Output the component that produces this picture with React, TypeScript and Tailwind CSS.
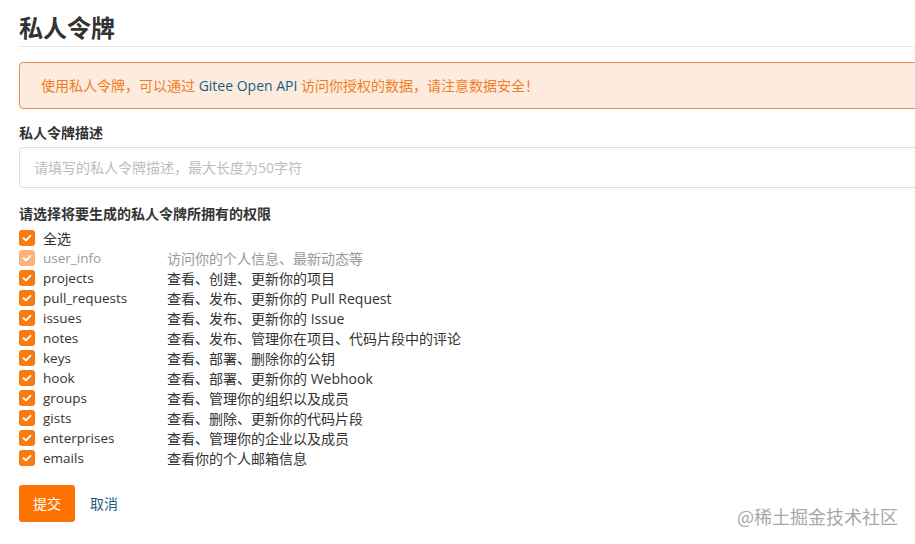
import React from 'react';

const perms = [
  { name: 'user_info', desc: '访问你的个人信息、最新动态等', locked: true },
  { name: 'projects', desc: '查看、创建、更新你的项目' },
  { name: 'pull_requests', desc: '查看、发布、更新你的 Pull Request' },
  { name: 'issues', desc: '查看、发布、更新你的 Issue' },
  { name: 'notes', desc: '查看、发布、管理你在项目、代码片段中的评论' },
  { name: 'keys', desc: '查看、部署、删除你的公钥' },
  { name: 'hook', desc: '查看、部署、更新你的 Webhook' },
  { name: 'groups', desc: '查看、管理你的组织以及成员' },
  { name: 'gists', desc: '查看、删除、更新你的代码片段' },
  { name: 'enterprises', desc: '查看、管理你的企业以及成员' },
  { name: 'emails', desc: '查看你的个人邮箱信息' },
];

const Check = ({ faded }: { faded?: boolean }) => (
  <span className={`w-4 h-4 rounded-[3px] flex items-center justify-center shrink-0 ${faded ? 'bg-[#fcb27a]' : 'bg-[#fa7a12]'}`}>
    <svg width="10" height="10" viewBox="0 0 10 10">
      <path d="M1.6 5.2 L4 7.4 L8.4 2.8" fill="none" stroke="white" strokeWidth="1.9" strokeLinecap="round" strokeLinejoin="round" />
    </svg>
  </span>
);

export default function App() {
  return (
    <div className="w-[915px] h-[544px] overflow-hidden bg-white relative font-['Open_Sans','Noto_Sans_CJK_SC',sans-serif] text-[#333]">
      <div className="pl-[19px] w-[1100px]">
        <h1 className="text-[24px] font-bold leading-[34px] pt-[11px] pb-[1px] border-b border-[#e5e5e5] text-[#333]">私人令牌</h1>

        <div className="mt-[15px] h-[47px] border border-[#ee8a4a] rounded-[4px] bg-[#fdecdd] flex items-center pl-[21px] text-[14px] text-[#f07c26]">
          使用私人令牌，可以通过&nbsp;<span className="text-[#155e82]">Gitee Open API</span>&nbsp;访问你授权的数据，请注意数据安全！
        </div>

        <div className="mt-[14px] text-[14px] font-bold leading-[20px] text-[#333]">私人令牌描述</div>
        <div className="mt-[4px] h-[41px] border border-[#dedede] rounded-[4px] flex items-center pl-[14px] text-[14px] text-[#bdbdbd]">
          请填写的私人令牌描述，最大长度为50字符
        </div>

        <div className="mt-[16px] text-[14px] font-bold leading-[20px] text-[#333]">请选择将要生成的私人令牌所拥有的权限</div>
        <div className="mt-[4px] flex flex-col">
          <div className="h-[20px] flex items-center gap-2 text-[14px]">
            <Check />
            <span>全选</span>
          </div>
          {perms.map((p) => (
            <div key={p.name} className={`h-[20px] flex items-center text-[14px] ${p.locked ? 'text-[#999]' : 'text-[#333]'}`}>
              <Check faded={p.locked} />
              <span className="ml-2 w-[124px] text-[13.5px]">{p.name}</span>
              <span>{p.desc}</span>
            </div>
          ))}
        </div>

        <div className="mt-[17px] flex items-center gap-[15px]">
          <button className="w-[56px] h-[37px] rounded-[3px] bg-[#fe7300] text-white text-[14px]">提交</button>
          <span className="text-[14px] text-[#1c5d83]">取消</span>
        </div>
      </div>
      <div className="absolute left-[737px] top-[503px] text-[18px] text-[#a8a8a8] font-['Noto_Sans_CJK_SC',sans-serif]">@稀土掘金技术社区</div>
    </div>
  );
}
